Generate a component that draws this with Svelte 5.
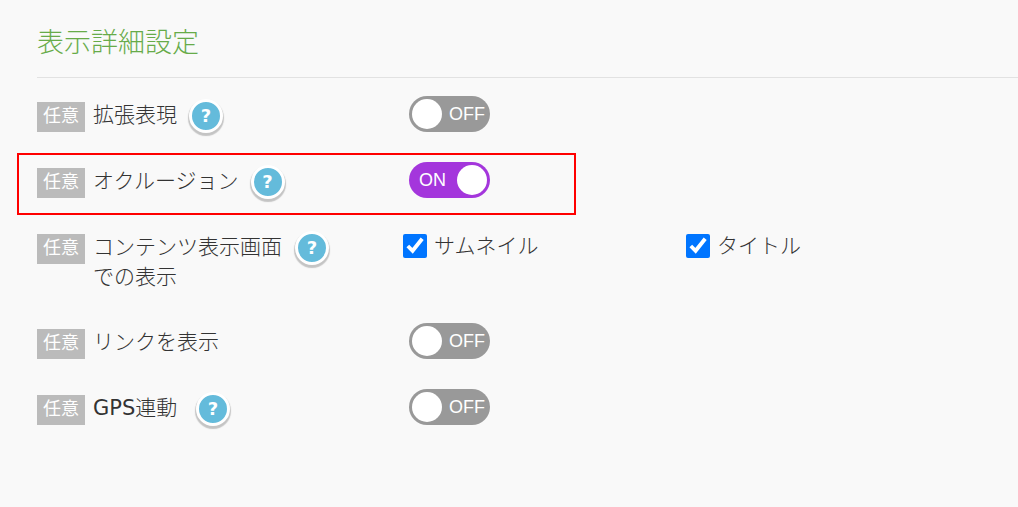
<script>
  let rows = $state([
    { id: 'expand', label: '拡張表現', help: true, on: false },
    { id: 'occlusion', label: 'オクルージョン', help: true, on: true, marked: true },
    {
      id: 'contents',
      label: 'コンテンツ表示画面での表示',
      help: true,
      options: [
        { name: 'サムネイル', checked: true },
        { name: 'タイトル', checked: true },
      ],
    },
    { id: 'link', label: 'リンクを表示', on: false },
    { id: 'gps', latin: 'GPS', label: '連動 ', help: true, on: false },
  ]);
</script>

<section>
  <h2>表示詳細設定</h2>

  {#each rows as row (row.id)}
    <div class="row" class:marked={row.marked}>
      <span class="badge">任意</span>
      <div class="name">
        <span class="label" id={row.id}>{#if row.latin}<span class="latin">{row.latin}</span>{/if}{row.label}</span>
        {#if row.help}
          <button class="help" type="button" aria-label="ヘルプ">?</button>
        {/if}
      </div>

      {#if row.options}
        <div class="options" role="group" aria-labelledby={row.id}>
          {#each row.options as option}
            <label>
              <input type="checkbox" bind:checked={option.checked} />
              {option.name}
            </label>
          {/each}
        </div>
      {:else}
        <button
          class="switch"
          class:on={row.on}
          type="button"
          role="switch"
          aria-checked={row.on}
          aria-labelledby={row.id}
          onclick={() => (row.on = !row.on)}>
          <span class="knob"></span>
          <span class="state">{row.on ? 'ON' : 'OFF'}</span>
        </button>
      {/if}
    </div>
  {/each}
</section>

<style>
  :global(body) {
    background: #f9f9f9;
    color: #333;
    font-family: "DejaVu Sans", "Noto Sans CJK JP", sans-serif;
    font-weight: 300;
  }

  section {
    padding: 23px 0 0 37px;
  }

  h2 {
    margin: 0 0 18px;
    padding-bottom: 14px;
    border-bottom: 1px solid #e2e2e2;
    color: #67ab49;
    font-size: 27px;
    font-weight: 300;
    line-height: 40px;
  }

  .row {
    position: relative;
    display: grid;
    grid-template-columns: 48px 310px 1fr;
    column-gap: 8px;
    align-items: start;
    min-height: 37px;
    margin-bottom: 29px;
  }

  .marked::after {
    content: "";
    position: absolute;
    top: -9px;
    left: -20px;
    width: 555px;
    height: 58px;
    border: 2px solid #f00;
    pointer-events: none;
  }

  .badge {
    height: 30px;
    margin-top: 6px;
    background: #bbb;
    color: #fff;
    font-size: 18px;
    font-weight: 400;
    line-height: 28px;
    text-align: center;
  }

  .name {
    display: flex;
    align-items: flex-start;
    gap: 12px;
  }

  .label {
    max-width: 190px;
    padding: 4px 0 2px;
    font-size: 21px;
    line-height: 30px;
    white-space: break-spaces;
  }

  .latin {
    font-weight: 400;
  }

  .help {
    flex: none;
    width: 34px;
    height: 34px;
    margin-top: 3px;
    padding: 0;
    border: 3px solid #fff;
    border-radius: 50%;
    background: #64bbdb;
    box-shadow: 0 2px 1px 1px #c4c4c4;
    color: #fff;
    font: bold 18px/26px "DejaVu Sans", sans-serif;
    cursor: pointer;
  }

  .switch {
    display: flex;
    align-items: center;
    justify-content: space-between;
    width: 81px;
    height: 36px;
    margin-left: -2px;
    padding: 0 5px 0 3px;
    border: 0;
    border-radius: 18px;
    background: #999;
    color: #fff;
    font: 18px "Liberation Sans", Arial, sans-serif;
    cursor: pointer;
  }

  .switch.on {
    flex-direction: row-reverse;
    padding: 0 3px 0 10px;
    background: #a436dc;
  }

  .knob {
    width: 30px;
    height: 30px;
    border-radius: 50%;
    background: #fff;
  }

  .options {
    display: grid;
    grid-template-columns: 283px 1fr;
    margin-left: -8px;
    padding-top: 3px;
  }

  .options label {
    display: flex;
    align-items: center;
    gap: 7px;
    font-size: 21px;
    line-height: 30px;
  }

  input {
    width: 24px;
    height: 24px;
    margin: 0;
    accent-color: #0075ff;
  }
</style>
